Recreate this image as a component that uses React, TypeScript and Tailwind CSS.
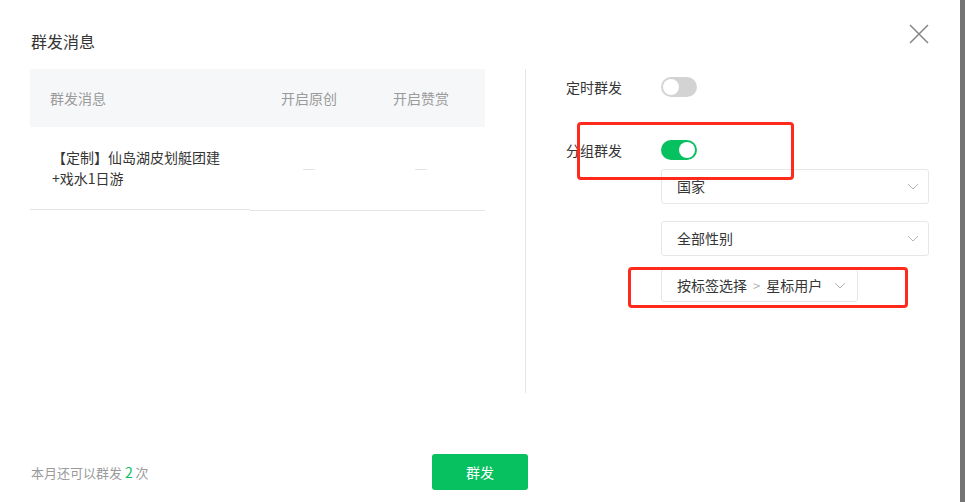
import React from 'react';

const font = { fontFamily: '"Noto Sans CJK SC", "Noto Sans", sans-serif' };

const Chevron = () => (
  <svg width="12" height="7" viewBox="0 0 12 7" fill="none">
    <path d="M1 1l5 5 5-5" stroke="#b5b5b5" strokeWidth="1" />
  </svg>
);

const Toggle = ({ on }: { on: boolean }) => (
  <div
    className={`w-[36px] h-[20px] rounded-full p-[2px] flex ${
      on ? 'bg-[#07c160] justify-end' : 'bg-[#d3d3d3] justify-start'
    }`}
  >
    <div className="w-[16px] h-[16px] rounded-full bg-white" />
  </div>
);

const Select = ({ label }: { label: string }) => (
  <div className="w-[268px] h-[35px] border border-[#e4e8eb] rounded-[3px] flex items-center justify-between pl-[15px] pr-[9px]">
    <span className="text-[14px] text-[#353535]">{label}</span>
    <Chevron />
  </div>
);

export default function App() {
  return (
    <div className="flex w-[965px] h-[502px] bg-white relative" style={font}>
      <div className="flex-1 flex flex-col relative">
        {/* header */}
        <div className="flex items-start justify-between pl-[31px] pr-[31px] pt-[29px]">
          <h1 className="text-[16px] leading-[24px] text-[#353535]">群发消息</h1>
          <svg width="20" height="20" viewBox="0 0 20 20" className="-mt-[5px] -mr-[0px]">
            <path d="M1 1l18 18M19 1L1 19" stroke="#858585" strokeWidth="1.5" />
          </svg>
        </div>

        {/* body */}
        <div className="flex mt-[16px] pl-[30px]">
          {/* table */}
          <div className="w-[455px]">
            <div className="flex h-[58px] bg-[#f6f7f9] items-center text-[14px] text-[#9a9a9a]">
              <div className="w-[220px] pl-[20px]">群发消息</div>
              <div className="w-[118px] text-center">开启原创</div>
              <div className="w-[106px] text-center">开启赞赏</div>
            </div>
            <div className="flex items-start">
              <div className="w-[220px] h-[83px] border-b border-[#e5e5e5] flex items-center pl-[22px] text-[14px] leading-[21px] text-[#353535]">
                <div>
                  【定制】仙岛湖皮划艇团建
                  <br />
                  +戏水1日游
                </div>
              </div>
              <div className="flex-1 flex h-[84px] border-b border-[#e5e5e5]">
                <div className="w-[118px] flex items-center justify-center pt-[1px]">
                  <div className="w-[12px] h-px bg-[#e3e3e3]" />
                </div>
                <div className="w-[106px] flex items-center justify-center pt-[1px]">
                  <div className="w-[12px] h-px bg-[#e3e3e3]" />
                </div>
              </div>
            </div>
          </div>

          {/* divider */}
          <div className="ml-[40px] w-px h-[324px] bg-[#e5e5e5]" />

          {/* settings */}
          <div className="pl-[40px] pt-[8px] flex flex-col">
            <div className="flex items-center h-[20px]">
              <span className="w-[95px] text-[14px] text-[#353535]">定时群发</span>
              <Toggle on={false} />
            </div>
            <div className="flex items-center h-[20px] mt-[43px]">
              <span className="w-[95px] text-[14px] text-[#353535]">分组群发</span>
              <Toggle on={true} />
            </div>
            <div className="pl-[95px] mt-[9px] flex flex-col">
              <Select label="国家" />
              <div className="mt-[17px]">
                <Select label="全部性别" />
              </div>
              <div className="mt-[13px] w-[197px] h-[33px] border border-[#e4e8eb] rounded-[3px] flex items-center justify-between pl-[15px] pr-[11px]">
                <span className="text-[14px] text-[#353535] flex items-center">
                  按标签选择
                  <span className="mx-[6px] text-[#b2b2b2] text-[13px]">&gt;</span>
                  星标用户
                </span>
                <Chevron />
              </div>
            </div>
          </div>
        </div>

        {/* footer */}
        <div className="mt-auto mb-[12px] flex items-center pl-[31px]">
          <div className="w-[401px] text-[13px] text-[#9a9a9a]">
            本月还可以群发 <span className="text-[#07c160] text-[14px]">2</span> 次
          </div>
          <button className="w-[96px] h-[36px] rounded-[3px] bg-[#07c160] text-white text-[14px]">
            群发
          </button>
        </div>

        {/* annotation boxes */}
        <div className="absolute left-[577px] top-[122px] w-[217px] h-[58px] border-[3px] border-[#ff2a1c] rounded-[4px]" />
        <div className="absolute left-[628px] top-[267px] w-[280px] h-[41px] border-[3px] border-[#ff2a1c] rounded-[4px]" />
      </div>

      {/* scrollbar */}
      <div className="w-[5px] h-full bg-[#747474]" />
    </div>
  );
}
